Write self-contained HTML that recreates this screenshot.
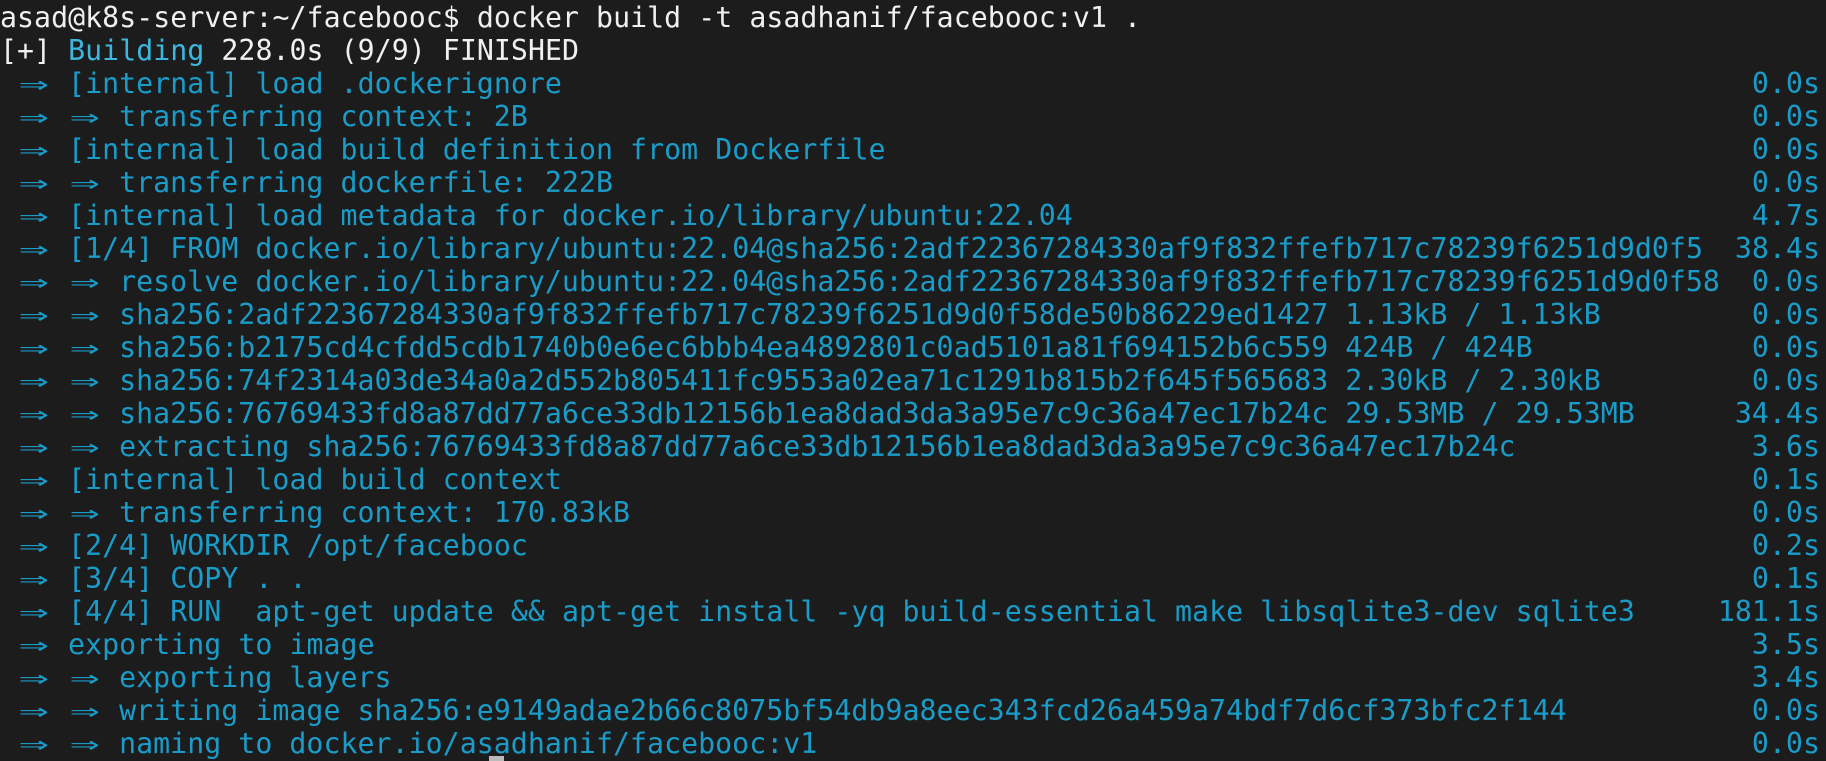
<!DOCTYPE html>
<html><head><meta charset="utf-8"><style>
html,body{margin:0;padding:0;background:#1c1c1c;width:1826px;height:761px;overflow:hidden}
.t{position:relative;font-family:"DejaVu Sans Mono","Liberation Mono",monospace;font-size:28.2px;line-height:33px;color:#1a9cc9;padding-top:1px;letter-spacing:0.06px}
.l{position:relative;height:33px;white-space:pre}
.r{position:absolute;right:6px;top:0}
.w{color:#f0f0f0}
.b{color:#3cb8e0}
i{font-style:normal;display:inline-block;width:34px;height:33px;vertical-align:top;position:relative}
i::before{content:"⇒";position:absolute;left:2px;top:0;transform:scaleX(1.75);transform-origin:left center}
.cur{position:absolute;left:489px;top:756px;width:15px;height:5px;background:#bbb}
</style></head><body><div class="t">
<div class="l w">asad@k8s-server:~/facebooc$ docker build -t asadhanif/facebooc:v1 .</div>
<div class="l w">[+] <span class="b">Building</span> 228.0s (9/9) FINISHED</div>
<div class="l"> <i></i> [internal] load .dockerignore<span class="r">0.0s</span></div>
<div class="l"> <i></i> <i></i> transferring context: 2B<span class="r">0.0s</span></div>
<div class="l"> <i></i> [internal] load build definition from Dockerfile<span class="r">0.0s</span></div>
<div class="l"> <i></i> <i></i> transferring dockerfile: 222B<span class="r">0.0s</span></div>
<div class="l"> <i></i> [internal] load metadata for docker.io/library/ubuntu:22.04<span class="r">4.7s</span></div>
<div class="l"> <i></i> [1/4] FROM docker.io/library/ubuntu:22.04@sha256:2adf22367284330af9f832ffefb717c78239f6251d9d0f5<span class="r">38.4s</span></div>
<div class="l"> <i></i> <i></i> resolve docker.io/library/ubuntu:22.04@sha256:2adf22367284330af9f832ffefb717c78239f6251d9d0f58<span class="r">0.0s</span></div>
<div class="l"> <i></i> <i></i> sha256:2adf22367284330af9f832ffefb717c78239f6251d9d0f58de50b86229ed1427 1.13kB / 1.13kB<span class="r">0.0s</span></div>
<div class="l"> <i></i> <i></i> sha256:b2175cd4cfdd5cdb1740b0e6ec6bbb4ea4892801c0ad5101a81f694152b6c559 424B / 424B<span class="r">0.0s</span></div>
<div class="l"> <i></i> <i></i> sha256:74f2314a03de34a0a2d552b805411fc9553a02ea71c1291b815b2f645f565683 2.30kB / 2.30kB<span class="r">0.0s</span></div>
<div class="l"> <i></i> <i></i> sha256:76769433fd8a87dd77a6ce33db12156b1ea8dad3da3a95e7c9c36a47ec17b24c 29.53MB / 29.53MB<span class="r">34.4s</span></div>
<div class="l"> <i></i> <i></i> extracting sha256:76769433fd8a87dd77a6ce33db12156b1ea8dad3da3a95e7c9c36a47ec17b24c<span class="r">3.6s</span></div>
<div class="l"> <i></i> [internal] load build context<span class="r">0.1s</span></div>
<div class="l"> <i></i> <i></i> transferring context: 170.83kB<span class="r">0.0s</span></div>
<div class="l"> <i></i> [2/4] WORKDIR /opt/facebooc<span class="r">0.2s</span></div>
<div class="l"> <i></i> [3/4] COPY . .<span class="r">0.1s</span></div>
<div class="l"> <i></i> [4/4] RUN  apt-get update &amp;&amp; apt-get install -yq build-essential make libsqlite3-dev sqlite3<span class="r">181.1s</span></div>
<div class="l"> <i></i> exporting to image<span class="r">3.5s</span></div>
<div class="l"> <i></i> <i></i> exporting layers<span class="r">3.4s</span></div>
<div class="l"> <i></i> <i></i> writing image sha256:e9149adae2b66c8075bf54db9a8eec343fcd26a459a74bdf7d6cf373bfc2f144<span class="r">0.0s</span></div>
<div class="l"> <i></i> <i></i> naming to docker.io/asadhanif/facebooc:v1<span class="r">0.0s</span></div>
</div><div class="cur"></div></body></html>
